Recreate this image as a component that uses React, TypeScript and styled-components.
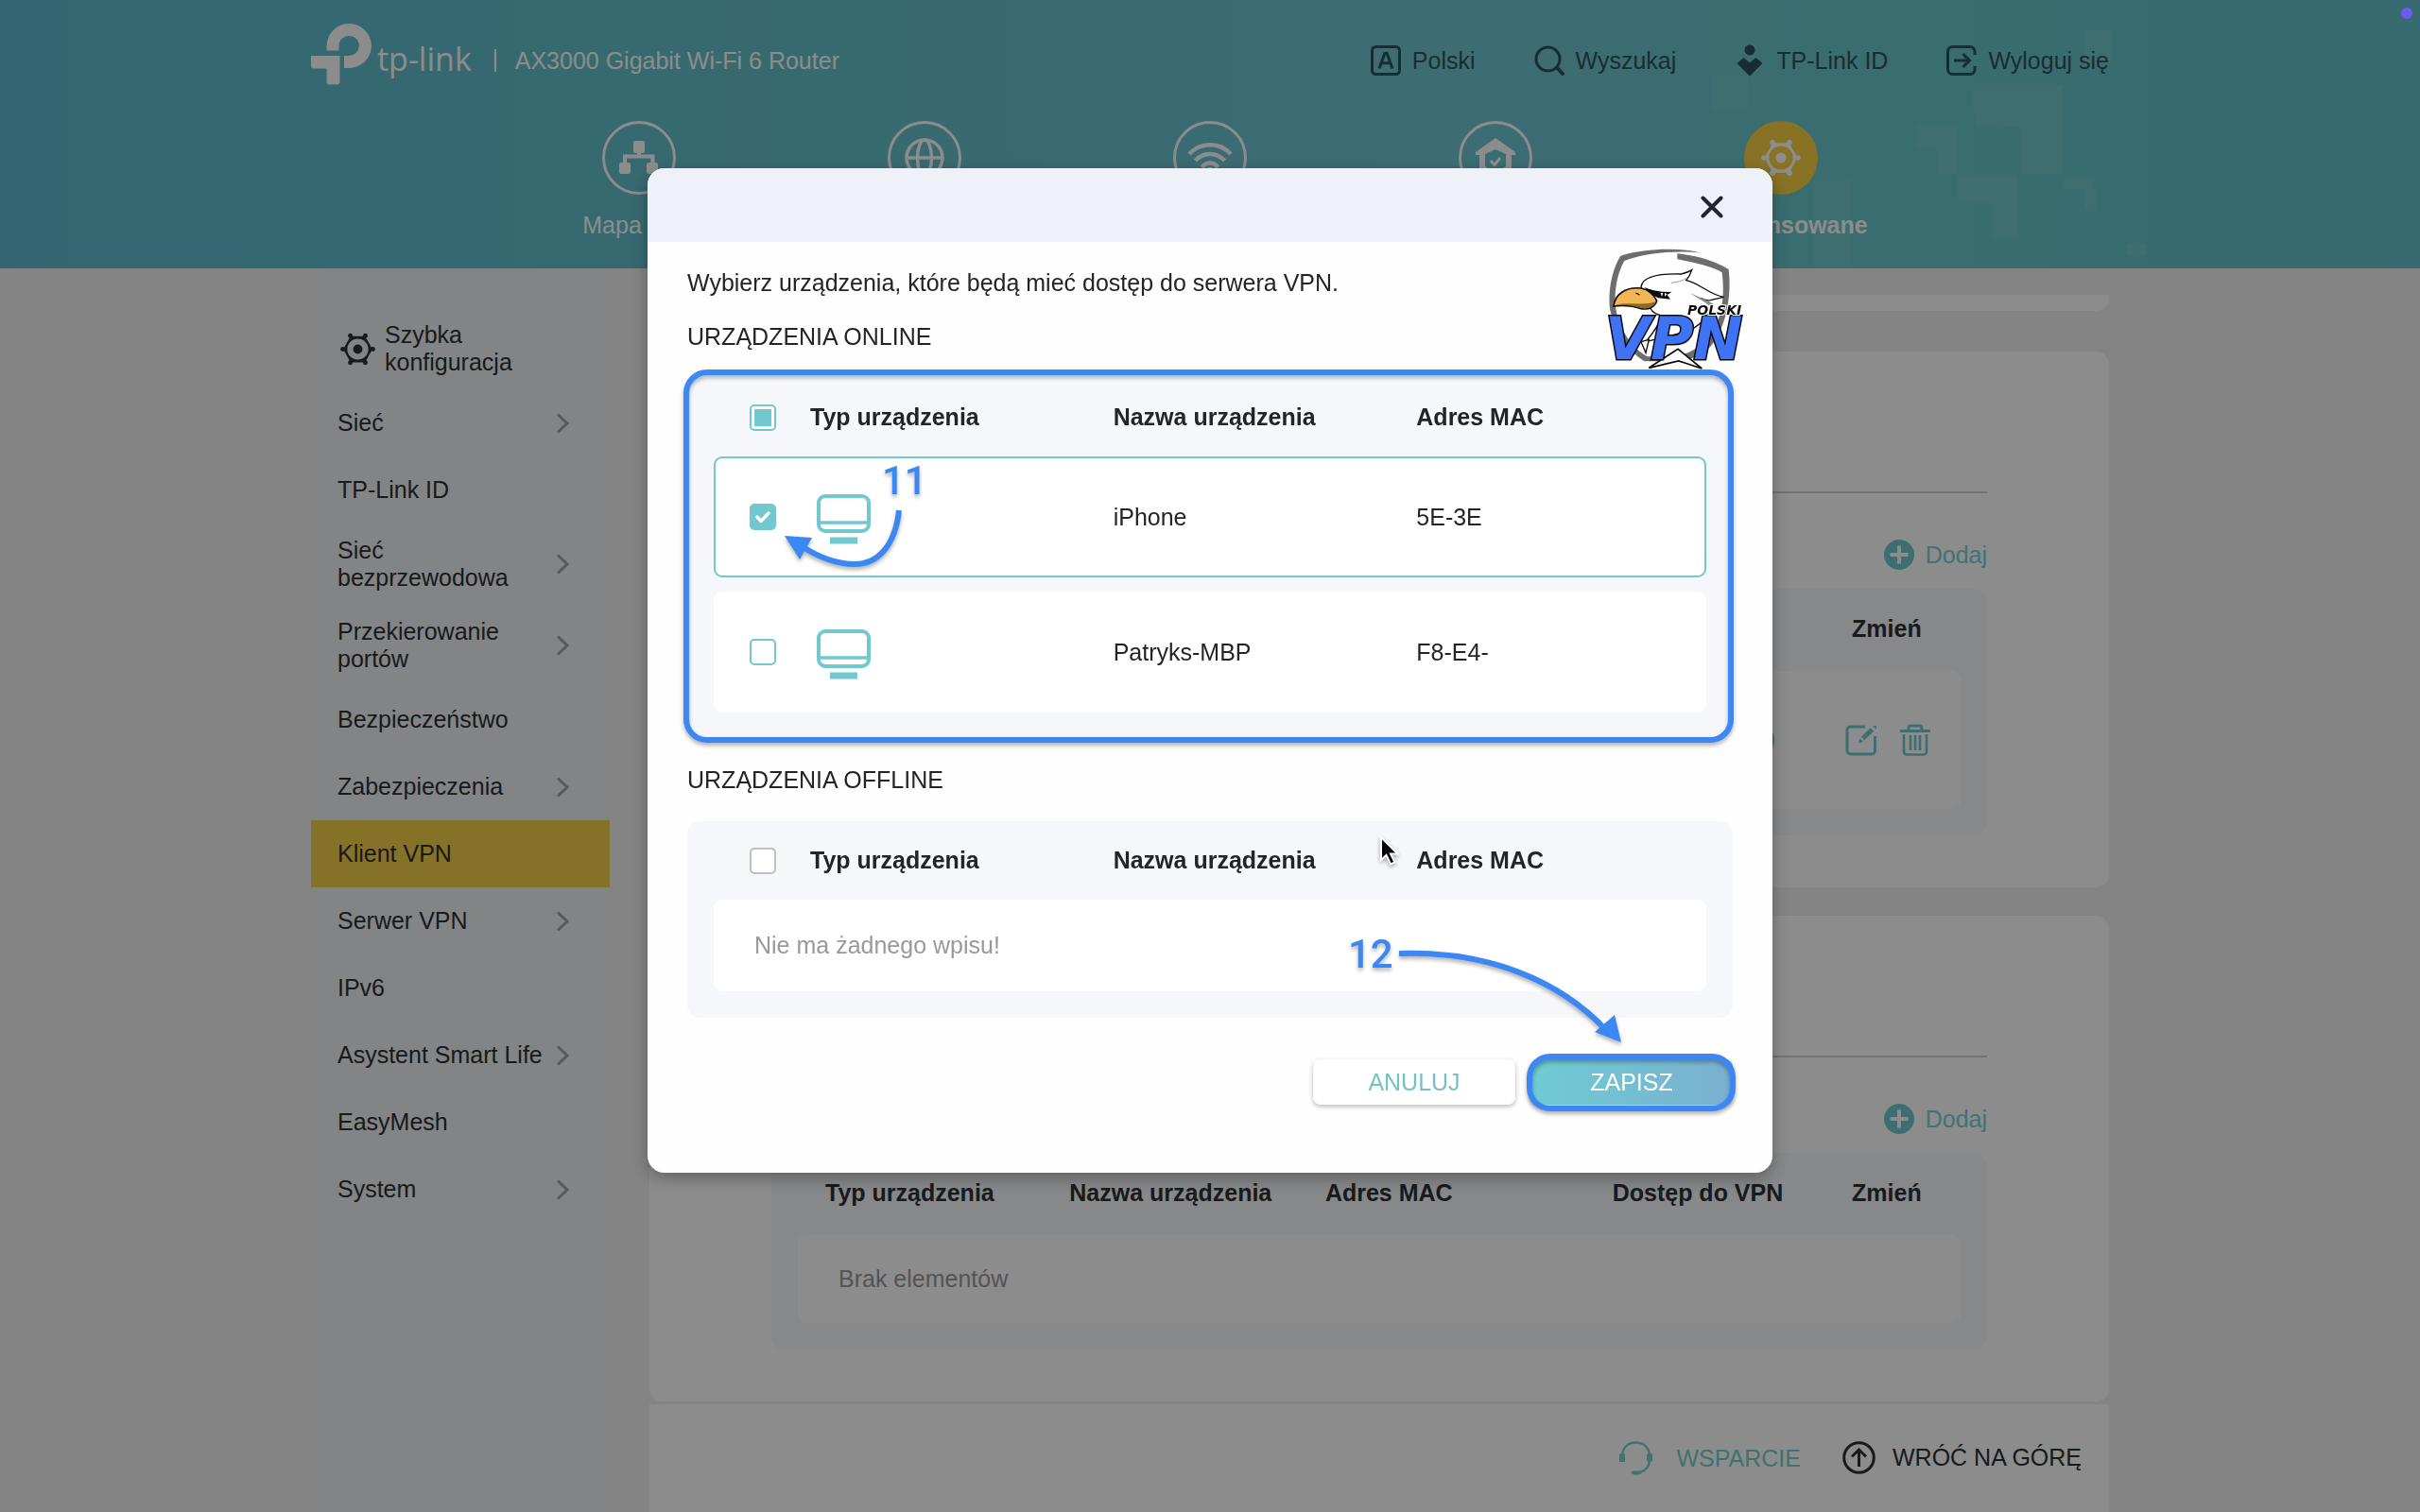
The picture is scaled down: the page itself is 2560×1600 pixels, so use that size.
import React, { useEffect, useRef, useState } from "react";
import styled, { createGlobalStyle, css } from "styled-components";

const teal = "#71c9cf";
const ink = "#2c3033";
const blue = "#3b88f5";

const GlobalStyle = createGlobalStyle`
  *, *::before, *::after { box-sizing: border-box; }
  html, body { margin: 0; padding: 0; }
  body {
    font-family: "Liberation Sans", Arial, Helvetica, sans-serif;
    font-size: 25px;
    line-height: 29px;
    color: ${ink};
    background: #f0f0f0;
    overflow: hidden;
  }
  button, input { font: inherit; color: inherit; margin: 0; }
  button { border: 0; padding: 0; background: none; cursor: pointer; }
  a { color: inherit; text-decoration: none; }
  h1, h2, p { margin: 0; padding: 0; font-weight: 400; font-size: inherit; }
  svg { display: block; flex: none; }
`;

const Page = styled.div`
  height: 100vh;
  overflow: hidden;
  display: flex;
  flex-direction: column;
`;

const Container = styled.div`
  width: 100%;
  max-width: 1902px;
  margin: 0 auto;
`;

/* ---------- header ---------- */

const Header = styled.header`
  position: relative;
  flex: none;
  height: 284px;
  color: #fff;
  background: linear-gradient(90deg, #5ebbcf 0%, #66c2cb 38%, #70c5d3 58%, #68c6cb 78%, #66c3ce 100%);
`;

const HeaderPattern = styled.svg`
  position: absolute;
  top: 0;
  right: 0;
`;

const HeaderContent = styled(Container)`
  position: relative;
`;

const TopBar = styled.div`
  height: 128px;
  padding-top: 24px;
  display: flex;
  justify-content: space-between;
`;

const Brand = styled.div`
  display: flex;
  align-items: center;
  height: 80px;
  gap: 6px;
`;

const BrandMark = styled.svg`
  align-self: flex-start;
  margin-top: 1px;
`;

const Wordmark = styled.span`
  padding-bottom: 4px;
  font-family: "Open Sans", "Noto Sans", sans-serif;
  font-size: 34px;
  font-weight: 500;
  line-height: 40px;
`;

const Model = styled.h1`
  margin-left: 18px;
  padding-left: 22px;
  background: linear-gradient(#fff, #fff) left center / 2px 24px no-repeat;
`;

const Tools = styled.div`
  display: flex;
  align-items: center;
  height: 80px;
  gap: 62px;
  color: #31505e;
`;

const Tool = styled.button`
  display: flex;
  align-items: center;
  gap: 12px;
`;

const MainNav = styled.nav`
  display: flex;
  justify-content: center;
`;

const NavItem = styled.a<{ $active?: boolean }>`
  width: 302px;
  display: flex;
  flex-direction: column;
  align-items: center;
  gap: 18px;
  font-weight: ${(p) => (p.$active ? 700 : 400)};
`;

const NavCircle = styled.span<{ $active?: boolean }>`
  width: 78px;
  height: 78px;
  border-radius: 50%;
  border: 3px solid ${(p) => (p.$active ? "#f6cf46" : "#fff")};
  background: ${(p) => (p.$active ? "#f6cf46" : "transparent")};
  display: flex;
  align-items: center;
  justify-content: center;
`;

/* ---------- body ---------- */

const Body = styled(Container)`
  flex: 1;
  display: flex;
  gap: 42px;
`;

const Sidebar = styled.nav`
  width: 316px;
  padding-top: 43px;
  background: #eff1f2;
`;

const SideLink = styled.a<{ $active?: boolean; $icon?: boolean }>`
  display: flex;
  align-items: center;
  gap: ${(p) => (p.$icon ? "10px" : "12px")};
  min-height: 71px;
  padding: ${(p) => (p.$icon ? "13px 42px 14px 31px" : "14px 42px 14px 28px")};
  background: ${(p) => (p.$active ? "#f5cf46" : "transparent")};

  span { flex: 1; }
`;

const Main = styled.main`
  flex: 1;
  display: flex;
  flex-direction: column;
  padding-top: 28px;
`;

const CardTail = styled.div`
  height: 17px;
  margin-bottom: 43px;
  border-radius: 0 0 14px 14px;
  background: #fff;
`;

const Card = styled.section`
  padding: 0 129px 55px;
  border-radius: 14px;
  background: #fff;

  & + & { margin-top: 30px; }
`;

const CardTitle = styled.h2`
  height: 150px;
  padding-top: 64px;
  border-bottom: 2px solid #cfcfcf;
  text-transform: uppercase;
`;

const AddButton = styled.button`
  display: flex;
  align-items: center;
  gap: 12px;
  height: 32px;
  margin: 49px 0 20px auto;
  color: #76d3cf;
`;

const Footer = styled.footer`
  flex: 1;
  margin-top: 3px;
  padding: 39px 29px 0;
  background: #fff;
  display: flex;
  justify-content: flex-end;
  align-items: flex-start;
  gap: 44px;
`;

const FooterLink = styled.a<{ $accent?: boolean }>`
  display: flex;
  align-items: center;
  gap: ${(p) => (p.$accent ? "24px" : "18px")};
  min-height: 32px;
  color: ${(p) => (p.$accent ? "#76d0cc" : ink)};
`;

/* ---------- tables ---------- */

const Panel = styled.div`
  padding: 0 28px 13px;
  border-radius: 14px;
  background: #f5f7fa;
`;

const Table = styled.table<{ $head: number }>`
  width: 100%;
  table-layout: fixed;
  border-collapse: separate;
  border-spacing: 0 15px;

  th {
    height: ${(p) => p.$head}px;
    padding: 0 0 0 14px;
    text-align: left;
    font-weight: 700;
    vertical-align: middle;
  }
`;

const Row = styled.tr<{ $height: number; $selected?: boolean }>`
  td {
    height: ${(p) => p.$height}px;
    padding: 0 0 0 14px;
    background: #fff;
    border: 0 solid ${teal};
    vertical-align: middle;
  }
  td:first-child { border-radius: 9px 0 0 9px; }
  td:last-child { border-radius: 0 9px 9px 0; }
  td:only-child { border-radius: 9px; padding-left: 43px; color: #999; }
  ${(p) =>
    p.$selected &&
    css`
      td { border-width: 2px 0; }
      td:first-child { border-left-width: 2px; padding-left: 12px; }
      td:last-child { border-right-width: 2px; }
    `}
`;

const WideTable = styled(Table)`
  th { padding-bottom: 3px; padding-left: 29px; }
`;

const WideRow = styled(Row)`
  td { padding-left: 28px; }
`;

const Actions = styled.div`
  display: flex;
  gap: 24px;
  margin-left: -6px;
  color: ${teal};
`;

const Switch = styled.input`
  appearance: none;
  display: block;
  width: 74px;
  height: 36px;
  border-radius: 18px;
  background: ${teal};
`;

const Col = styled.col<{ $w?: string }>`
  width: ${(p) => p.$w || "auto"};
`;

const CheckCell = styled.div`
  width: 28px;
  height: 28px;
  margin-left: 24px;
`;

const checkMark = (
  <svg viewBox="0 0 28 28" width="28" height="28" aria-hidden="true">
    <path d="M8 14l4 4.500 8-8.500" fill="none" stroke="#fff" strokeWidth="3.500" strokeLinecap="round" strokeLinejoin="round" />
  </svg>
);

const CheckLabel = styled.label`
  position: relative;
  display: block;

  svg { position: absolute; inset: 0; pointer-events: none; }
`;

const CheckInput = styled.input<{ $muted?: boolean }>`
  appearance: none;
  display: block;
  width: 28px;
  height: 28px;
  border: 2px solid ${(p) => (p.$muted ? "#bdbfc2" : teal)};
  border-radius: 5px;
  background: #fff;

  &:checked { background: ${teal}; }
  &:indeterminate {
    background: linear-gradient(${teal}, ${teal}) center / 18px 18px no-repeat #fff;
  }
`;

/* ---------- dialog ---------- */

const Overlay = styled.div`
  position: fixed;
  inset: 0;
  display: flex;
  justify-content: center;
  align-items: flex-start;
  padding-top: 178px;
  background: rgba(0, 0, 0, 0.45);
`;

const Dialog = styled.div`
  position: relative;
  width: 1190px;
  max-width: 92vw;
  border-radius: 18px;
  background: #fefefe;
  color: #222425;
  box-shadow: 0 6px 18px rgba(0, 0, 0, 0.3);
`;

const DialogHeader = styled.div`
  height: 78px;
  padding: 4px 52px 0;
  border-radius: 18px 18px 0 0;
  background: #eef1f8;
  display: flex;
  justify-content: flex-end;
  align-items: center;
`;

const DialogBody = styled.div`
  padding: 29px 42px 72px;
`;

const Text = styled.p`
  line-height: 28px;
`;

const GroupTitle = styled.h2`
  margin: 29px 0 30px;
  line-height: 28px;
`;

const Buttons = styled.div`
  display: flex;
  justify-content: flex-end;
  gap: 16px;
  margin-top: 44px;
`;

const Button = styled.button<{ $primary?: boolean }>`
  width: 214px;
  height: 48px;
  border-radius: 8px;
  color: ${(p) => (p.$primary ? "#fff" : teal)};
  background: ${(p) => (p.$primary ? "linear-gradient(90deg, #6eccd3, #7bafd0)" : "#fff")};
  box-shadow: 0 2px 5px rgba(0, 0, 0, 0.28);
`;

const GradientLabel = styled.span`
  background: linear-gradient(90deg, #6cc9b6, #79b9cf);
  background-clip: text;
  color: transparent;
`;

const Watermark = styled.svg`
  position: absolute;
  top: 82px;
  right: 29px;
  overflow: visible;
`;

const Annotations = styled.svg`
  position: absolute;
  inset: 0;
  pointer-events: none;
  overflow: visible;
  filter: drop-shadow(0 3px 2px rgba(0, 0, 0, 0.3));
`;

const Pointer = styled.svg`
  position: absolute;
  left: 774px;
  top: 706px;
  filter: drop-shadow(0 2px 2px rgba(0, 0, 0, 0.35));
`;

const RecordingDot = styled.span`
  position: absolute;
  top: 8px;
  right: 8px;
  width: 12px;
  height: 12px;
  border-radius: 50%;
  background: #6a5ee8;
`;

/* ---------- icons ---------- */

const GearIcon = ({ size }: { size: number }) => (
  <svg width={size} height={size} viewBox="0 0 36 36" fill="currentColor" aria-hidden="true">
    <path d="M10.500 4.500H25.500L33 18 25.500 31.500H10.500L3 18Z" />
    {[0, 60, 120, 180, 240, 300].map((a) => (
      <circle
        key={a}
        cx={18 + 15.500 * Math.cos((a * Math.PI) / 180)}
        cy={18 + 16 * Math.sin((a * Math.PI) / 180)}
        r="2.400"
      />
    ))}
    <circle cx="18" cy="18" r="10.800" fill="var(--hole)" />
    <circle cx="18" cy="18" r="4.800" />
  </svg>
);

const GearWrap = styled.i<{ $hole: string }>`
  --hole: ${(p) => p.$hole};
  display: block;
`;

const Chevron = () => (
  <svg width="14" height="22" viewBox="0 0 14 22" fill="none" stroke="#a0a2a5" strokeWidth="3" aria-hidden="true">
    <path d="M1 1.500L11 11 1 20.500" />
  </svg>
);

const Monitor = () => (
  <svg width="72" height="72" viewBox="0 0 72 72" fill="none" stroke={teal} aria-hidden="true">
    <rect x="9" y="14" width="53" height="37" rx="7" strokeWidth="4" />
    <path d="M9 42H62" strokeWidth="3.500" />
    <path d="M21 61H50" strokeWidth="7" />
  </svg>
);

const AddIcon = () => (
  <svg width="32" height="32" viewBox="0 0 32 32" aria-hidden="true">
    <circle cx="16" cy="16" r="16" fill={teal} />
    <path d="M16 6.500V25.500M6.500 16H25.500" stroke="#fff" strokeWidth="4" />
  </svg>
);

const EditIcon = () => (
  <svg width="34" height="34" viewBox="0 0 34 34" fill="none" stroke="currentColor" strokeWidth="3" aria-hidden="true">
    <path d="M21 3H5.500A3.500 3.500 0 0 0 2 6.500V28.500A3.500 3.500 0 0 0 5.500 32H28A3.500 3.500 0 0 0 31.500 28.500V13" />
    <path d="M18.500 15.500L28.500 6" strokeWidth="5" />
    <path d="M14 20.500l1.500-5 3.500 3.500z" fill="currentColor" stroke="none" />
    <path d="M29 2h4v4z" fill="currentColor" stroke="none" />
  </svg>
);

const TrashIcon = () => (
  <svg width="32" height="34" viewBox="0 0 32 34" fill="none" stroke="currentColor" strokeWidth="3" aria-hidden="true">
    <path d="M0 7.500H32M9 7V4.500A2.500 2.500 0 0 1 11.500 2H20.500A2.500 2.500 0 0 1 23 4.500V7" />
    <path d="M4 11V29.500A3 3 0 0 0 7 32.500H25A3 3 0 0 0 28 29.500V11M11 12V28M16 12V28M21 12V28" strokeWidth="2.600" />
  </svg>
);

const LanguageIcon = () => (
  <svg width="32" height="32" viewBox="0 0 32 32" fill="none" stroke="currentColor" strokeWidth="3" aria-hidden="true">
    <rect x="1.500" y="1.500" width="29" height="29" rx="4" />
    <path d="M9 24.500L14.800 8.500H17.200L23 24.500M11 18.800H21" />
  </svg>
);

const SearchIcon = () => (
  <svg width="32" height="32" viewBox="0 0 32 32" fill="none" stroke="currentColor" strokeWidth="3" aria-hidden="true">
    <circle cx="14.500" cy="14.500" r="12.500" />
    <path d="M24 23.500L30 30" strokeWidth="4" strokeLinecap="round" />
  </svg>
);

const AccountIcon = () => (
  <svg width="32" height="34" viewBox="0 0 32 34" fill="currentColor" aria-hidden="true">
    <circle cx="16" cy="6" r="5.500" />
    <path d="M2.500 20L9.500 14 16 19.500 22.500 14 29.500 20 16 33.500Z" />
  </svg>
);

const LogoutIcon = () => (
  <svg width="32" height="32" viewBox="0 0 32 32" fill="none" stroke="currentColor" strokeWidth="3" aria-hidden="true">
    <path d="M30 10V6.500A5 5 0 0 0 25 1.500H6.500A5 5 0 0 0 1.500 6.500V25.500A5 5 0 0 0 6.500 30.500H25A5 5 0 0 0 30 25.500V22" />
    <path d="M8 16H24M17.500 9L24.500 16 17.500 23" />
  </svg>
);

const MapIcon = () => (
  <svg width="42" height="36" viewBox="0 0 42 36" aria-hidden="true">
    <g fill="#fff">
      <rect x="15" y="0" width="12" height="13" rx="2" />
      <rect x="0" y="23" width="12" height="12" rx="2" />
      <rect x="29" y="23" width="12" height="12" rx="2" />
    </g>
    <path d="M21 12V16M6 24V16.500H35.500V24" fill="none" stroke="#fff" strokeWidth="4" />
  </svg>
);

const GlobeIcon = () => (
  <svg width="42" height="42" viewBox="0 0 42 42" fill="none" stroke="#fff" strokeWidth="3.500" aria-hidden="true">
    <circle cx="21" cy="21" r="19" />
    <ellipse cx="21" cy="21" rx="7.500" ry="19" />
    <path d="M2 21H40" />
  </svg>
);

const WifiIcon = () => (
  <svg width="48" height="36" viewBox="0 0 48 36" fill="none" stroke="#fff" strokeWidth="4.500" aria-hidden="true">
    <path d="M2 14C14 1 34 1 46 14" />
    <path d="M8.500 21C17 11.500 31 11.500 39.500 21" />
    <path d="M15.500 28C20 22 28 22 32.500 28" />
    <circle cx="24" cy="32" r="2" fill="#fff" />
  </svg>
);

const ShieldHomeIcon = () => (
  <svg width="42" height="42" viewBox="0 0 42 42" aria-hidden="true">
    <path fill="#fff" fillRule="evenodd" d="M21 0L42 15V18H38V38L21 42 4 38V18H0V15ZM21 12L10 17V30L21 37 32 30V17Z" />
    <path d="M16 24L20 28.500 26 21" fill="none" stroke="#fff" strokeWidth="3" />
  </svg>
);

const HeadsetIcon = () => (
  <svg width="37" height="36" viewBox="0 0 37 36" fill="none" stroke="currentColor" strokeWidth="2.500" aria-hidden="true">
    <path d="M4 15C5 6 11 1.500 18.500 1.500S32 6 33 15M33 21C32.500 28 27 33 19 33.500" />
    <path d="M4 13.500V22M33 13.500V21.500" strokeWidth="6" />
    <path d="M16 33.500H22" strokeWidth="4" strokeLinecap="round" />
  </svg>
);

const UpIcon = () => (
  <svg width="35" height="35" viewBox="0 0 35 35" fill="none" stroke="currentColor" strokeWidth="3" aria-hidden="true">
    <circle cx="17.500" cy="17.500" r="15.800" />
    <path d="M17.500 27V9.500M10 16.500L17.500 9 25 16.500" />
  </svg>
);

const CloseIcon = () => (
  <svg width="24" height="24" viewBox="0 0 24 24" stroke="#20262c" strokeWidth="4" strokeLinecap="round" aria-hidden="true">
    <path d="M2.500 2.500L21.500 21.500M21.500 2.500L2.500 21.500" />
  </svg>
);

const EagleLogo = () => (
  <Watermark width="148" height="134" viewBox="0 0 148 134" aria-hidden="true">
    <g transform="scale(0.3333) translate(-171 -270)">
      <path
        d="M475 293C420 276 300 276 220 302 190 350 180 420 186 470 200 545 240 600 295 637H380C440 640 480 615 505 590 545 545 575 450 563 345 520 318 460 300 400 295V313C450 322 510 335 542 355 552 430 540 500 510 545 480 590 430 622 375 622H305C250 590 215 530 205 470 198 420 208 360 232 318 300 292 400 285 475 293Z"
        fill="#6d6d6d"
      />
      <path
        d="M285 400C290 370 340 358 412 360 425 357 437 353 446 347 442 360 437 370 428 380 470 388 500 425 548 433L505 443C490 445 480 440 475 436L510 460C500 500 470 520 440 540L300 575C325 545 345 515 350 492 330 488 320 478 315 470L285 400Z"
        fill="#fff"
        stroke="#0b0b0b"
        strokeWidth="4"
      />
      <path d="M380 388C400 386 415 382 432 372" fill="none" stroke="#999" strokeWidth="3" />
      <path d="M198 462C202 425 235 400 285 405 310 410 325 425 335 445 330 462 312 475 285 470 262 462 230 458 198 462Z" fill="#f3b654" stroke="#0b0b0b" strokeWidth="5" />
      <path d="M205 459C235 447 290 462 333 448 325 465 305 473 285 468 262 460 232 456 205 459Z" fill="#8a6a2c" />
      <path d="M268 420l12 6" stroke="#0b0b0b" strokeWidth="4" />
      <path d="M295 402C330 416 360 418 383 416L368 426 378 440 340 436C322 428 310 420 295 402Z" fill="#0b0b0b" />
      <path d="M347 420l8 0-4 12zM360 420l8 4-8 7z" fill="#fff" />
      <path d="M440 420C465 432 490 440 515 455L500 460C485 445 460 435 440 420Z" fill="#8b8b8b" />
      <path d="M310 658L402 598 478 660 404 636Z" fill="#fff" stroke="#0b0b0b" strokeWidth="5" />
      <path d="M285 575L310 568 300 610Z" fill="#fff" stroke="#0b0b0b" strokeWidth="4" />
    </g>
    <text
      x="0"
      y="120"
      fontFamily="DejaVu Sans, sans-serif"
      fontSize="62"
      fontWeight="700"
      fontStyle="italic"
      fill="#3f73f3"
      stroke="#0a0a14"
      strokeWidth="3"
      paintOrder="stroke"
    >
      VPN
    </text>
    <text x="87" y="73" fontFamily="DejaVu Sans, sans-serif" fontSize="14" fontWeight="700" fontStyle="italic" fill="#0b0b0b" stroke="#fff" strokeWidth="2" paintOrder="stroke">
      POLSKI
    </text>
  </Watermark>
);

/* ---------- parts ---------- */

function CheckBox(props: { label: string; checked?: boolean; mixed?: boolean; muted?: boolean }) {
  const ref = useRef<HTMLInputElement>(null);
  const [on, setOn] = useState(!!props.checked);
  useEffect(() => {
    if (ref.current) ref.current.indeterminate = !!props.mixed;
  }, [props.mixed]);
  return (
    <CheckCell>
      <CheckLabel>
        <CheckInput
          ref={ref}
          type="checkbox"
          aria-label={props.label}
          checked={on}
          onChange={(e) => setOn(e.target.checked)}
          $muted={props.muted}
        />
        {on && checkMark}
      </CheckLabel>
    </CheckCell>
  );
}

const sideItems = [
  { label: "Sieć", more: true },
  { label: "TP-Link ID" },
  { label: "Sieć bezprzewodowa", more: true },
  { label: "Przekierowanie portów", more: true },
  { label: "Bezpieczeństwo" },
  { label: "Zabezpieczenia", more: true },
  { label: "Klient VPN", active: true },
  { label: "Serwer VPN", more: true },
  { label: "IPv6" },
  { label: "Asystent Smart Life", more: true },
  { label: "EasyMesh" },
  { label: "System", more: true },
];

const navItems = [
  { label: "Mapa sieci", icon: <MapIcon /> },
  { label: "Internet", icon: <GlobeIcon /> },
  { label: "Sieć bezprzewodowa", icon: <WifiIcon /> },
  { label: "HomeShield", icon: <ShieldHomeIcon /> },
  { label: "Zaawansowane", icon: <GearWrap $hole="#f6cf46"><GearIcon size={42} /></GearWrap>, active: true },
];

const onlineDevices = [
  { name: "iPhone", mac: "5E-3E", checked: true },
  { name: "Patryks-MBP", mac: "F8-E4-", checked: false },
];

/* x, y, width, height, opacity */
const patternBlocks = [
  [667, 90, 94, 27, 0.2], [670, 117, 48, 16, 0.2], [718, 117, 43, 67, 0.2], [608, 133, 43, 24, 0.2],
  [629, 157, 22, 27, 0.2], [651, 185, 64, 30, 0.2], [688, 215, 27, 37, 0.2], [763, 188, 32, 12, 0.16],
  [785, 200, 13, 22, 0.16], [785, 32, 29, 35, 0.16], [391, 80, 38, 37, 0.16], [498, 190, 40, 94, 0.16],
  [829, 258, 22, 12, 0.16],
];

const DeviceTable = ({ mixed, children }: { mixed?: boolean; children: React.ReactNode }) => (
  <Panel>
    <Table $head={53}>
      <colgroup>
        <Col $w="88px" />
        <Col />
        <Col />
        <Col />
      </colgroup>
      <thead>
        <tr>
          <th><CheckBox label="Zaznacz wszystkie" mixed={mixed} muted={!mixed} /></th>
          <th>Typ urządzenia</th>
          <th>Nazwa urządzenia</th>
          <th>Adres MAC</th>
        </tr>
      </thead>
      <tbody>{children}</tbody>
    </Table>
  </Panel>
);

export default function App() {
  return (
    <>
      <GlobalStyle />
      <Page>
        <Header>
          <HeaderPattern width="1140" height="284" viewBox="0 0 1140 284" aria-hidden="true">
            {patternBlocks.map(([x, y, w, h, o]) => (
              <rect key={`${x}-${y}`} x={x} y={y} width={w} height={h} fill="#a5d8d2" opacity={o} />
            ))}
          </HeaderPattern>
          <HeaderContent>
            <TopBar>
              <Brand>
                <BrandMark width="64" height="65" viewBox="0 0 64 65" fill="#fff" aria-label="TP-Link" role="img">
                  <path d="M16.500 28.500V24A23.700 24 0 0 1 64 24 23.700 24 0 0 1 40 47H35V34H40A11 11 0 0 0 51 23.500 10.700 10.500 0 0 0 29.500 23.500V28.500Z" />
                  <path d="M0 34H30.500V62A3 3 0 0 1 27.500 64.500H19A3 3 0 0 1 16.500 62V47.500H3A3 3 0 0 1 0 44.500Z" />
                </BrandMark>
                <Wordmark>tp-link</Wordmark>
                <Model>AX3000 Gigabit Wi-Fi 6 Router</Model>
              </Brand>
              <Tools>
                <Tool><LanguageIcon />Polski</Tool>
                <Tool><SearchIcon />Wyszukaj</Tool>
                <Tool><AccountIcon />TP-Link ID</Tool>
                <Tool><LogoutIcon />Wyloguj się</Tool>
              </Tools>
            </TopBar>
            <MainNav>
              {navItems.map((n) => (
                <NavItem key={n.label} href="#" $active={n.active}>
                  <NavCircle $active={n.active}>{n.icon}</NavCircle>
                  {n.label}
                </NavItem>
              ))}
            </MainNav>
          </HeaderContent>
        </Header>

        <Body>
          <Sidebar>
            <SideLink href="#" $icon>
              <GearWrap $hole="#eff1f2"><GearIcon size={37} /></GearWrap>
              <span>Szybka konfiguracja</span>
            </SideLink>
            {sideItems.map((s) => (
              <SideLink key={s.label} href="#" $active={s.active}>
                <span>{s.label}</span>
                {s.more && <Chevron />}
              </SideLink>
            ))}
          </Sidebar>

          <Main>
            <CardTail />
            <Card>
              <CardTitle>Lista serwerów</CardTitle>
              <AddButton><AddIcon />Dodaj</AddButton>
              <Panel>
                <WideTable $head={57}>
                  <colgroup>
                    <Col $w="22%" />
                    <Col $w="22%" />
                    <Col $w="31.7%" />
                    <Col $w="12.6%" />
                    <Col />
                  </colgroup>
                  <thead>
                    <tr><th>Opis</th><th>Typ VPN</th><th>Status</th><th>Włącz</th><th>Zmień</th></tr>
                  </thead>
                  <tbody>
                    <WideRow $height={146}>
                      <td>VPN</td>
                      <td>OpenVPN</td>
                      <td>Połączono</td>
                      <td><Switch type="checkbox" role="switch" aria-label="Włącz" defaultChecked /></td>
                      <td>
                        <Actions>
                          <button aria-label="Edytuj"><EditIcon /></button>
                          <button aria-label="Usuń"><TrashIcon /></button>
                        </Actions>
                      </td>
                    </WideRow>
                  </tbody>
                </WideTable>
              </Panel>
            </Card>
            <Card>
              <CardTitle>Lista urządzeń</CardTitle>
              <AddButton><AddIcon />Dodaj</AddButton>
              <Panel>
                <WideTable $head={57}>
                  <colgroup>
                    <Col $w="21%" />
                    <Col $w="22%" />
                    <Col $w="24.7%" />
                    <Col $w="20.6%" />
                    <Col />
                  </colgroup>
                  <thead>
                    <tr>
                      <th>Typ urządzenia</th><th>Nazwa urządzenia</th><th>Adres MAC</th><th>Dostęp do VPN</th><th>Zmień</th>
                    </tr>
                  </thead>
                  <tbody>
                    <Row $height={93}><td colSpan={5}>Brak elementów</td></Row>
                  </tbody>
                </WideTable>
              </Panel>
            </Card>
            <Footer>
              <FooterLink href="#" $accent><HeadsetIcon />WSPARCIE</FooterLink>
              <FooterLink href="#"><UpIcon />WRÓĆ NA GÓRĘ</FooterLink>
            </Footer>
          </Main>
        </Body>
      </Page>

      <Overlay>
        <Dialog role="dialog" aria-label="Wybór urządzeń">
          <DialogHeader>
            <button aria-label="Zamknij"><CloseIcon /></button>
          </DialogHeader>
          <DialogBody>
            <Text>Wybierz urządzenia, które będą mieć dostęp do serwera VPN.</Text>
            <GroupTitle>URZĄDZENIA ONLINE</GroupTitle>
            <DeviceTable mixed>
              {onlineDevices.map((d) => (
                <Row key={d.name} $height={128} $selected={d.checked}>
                  <td><CheckBox label={d.name} checked={d.checked} /></td>
                  <td><Monitor /></td>
                  <td>{d.name}</td>
                  <td>{d.mac}</td>
                </Row>
              ))}
            </DeviceTable>
            <GroupTitle>URZĄDZENIA OFFLINE</GroupTitle>
            <DeviceTable>
              <Row $height={97}><td colSpan={4}>Nie ma żadnego wpisu!</td></Row>
            </DeviceTable>
            <Buttons>
              <Button><GradientLabel>ANULUJ</GradientLabel></Button>
              <Button $primary>ZAPISZ</Button>
            </Buttons>
          </DialogBody>

          <EagleLogo />
          <Annotations width="1190" height="1063" viewBox="0 0 1190 1063" fill="none" stroke={blue} strokeWidth="6" aria-hidden="true">
            <rect x="41" y="216" width="1105" height="389" rx="22" />
            <rect x="933" y="940" width="215" height="55" rx="22" />
            <path d="M266 362C262 400 243 419 219 419 200 419 180 411 163 400" />
            <path d="M145 389L174 391 161 414Z" fill={blue} stroke="none" />
            <path d="M795 831C890 828 965 860 1014 912" />
            <path d="M1030 925L1023 896 1002 914Z" fill={blue} stroke="none" />
            <g fill={blue} stroke="none" fontFamily="Roboto, sans-serif" fontSize="42" fontWeight="500">
              <text x="248" y="345">11</text>
              <text x="741" y="846">12</text>
            </g>
          </Annotations>
          <Pointer width="22" height="32" viewBox="0 0 22 32" aria-hidden="true">
            <path d="M2 2V26L7.500 21 12 30.500 16.500 28.500 12 19.500H19.500Z" fill="#000" stroke="#fff" strokeWidth="2" />
          </Pointer>
        </Dialog>
        <RecordingDot />
      </Overlay>
    </>
  );
}
